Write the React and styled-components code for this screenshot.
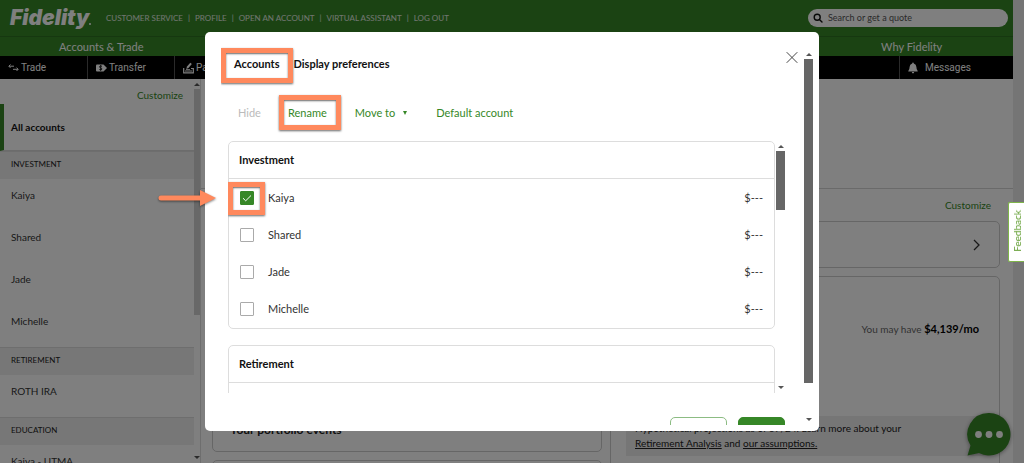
import React, { useState } from "react";
import styled, { createGlobalStyle } from "styled-components";

const GREEN = "#368727";
const ORANGE = "#ff895d";
const sans = '"Lato", "Noto Sans", sans-serif';
const navSans = '"Roboto", "Liberation Sans", sans-serif';

const GlobalStyle = createGlobalStyle`
  *, *::before, *::after { box-sizing: border-box; }
  body { margin: 0; background: #ebebeb; font-family: ${sans}; font-size: 11px; line-height: 16px; color: #333; }
  button, input { font: inherit; color: inherit; }
  button { border: 0; padding: 0; background: none; cursor: pointer; }
  ul, h1, h2, p { margin: 0; padding: 0; list-style: none; }
`;

/* ---------- page behind the dialog ---------- */

const Page = styled.div`
  height: 100vh;
  padding-right: 11px;
  overflow: hidden;
  display: flex;
  flex-direction: column;
  font-size: 10px;
`;

const TopBar = styled.header`
  display: flex;
  align-items: center;
  flex: none;
  height: 36px;
  padding: 0 5px 0 10px;
  background: ${GREEN};
  color: #fff;
`;

const Logo = styled.a`
  width: 96px;
  color: #fff;
  font: italic 900 21px/32px "Inter", ${sans};
  text-decoration: none;
  &::after {
    content: "";
    display: inline-block;
    width: 2px;
    height: 2px;
    border-radius: 1px;
    background: #fff;
  }
`;

const UtilityLinks = styled.nav`
  display: flex;
  flex: 1;
  font-size: 8px;
  line-height: 12px;
  white-space: nowrap;
`;

const UtilityLink = styled.a`
  color: #e2ebe0;
  text-decoration: none;
  & + &::before { content: "|"; margin: 0 5px; }
`;

const SearchBox = styled.label`
  display: flex;
  align-items: center;
  gap: 5px;
  width: 200px;
  height: 18px;
  padding: 0 5px;
  border-radius: 9px;
  background: #fff;
  color: #222;
`;

const SearchInput = styled.input`
  flex: 1;
  min-width: 0;
  height: 16px;
  padding: 0;
  border: 0;
  outline: 0;
  background: none;
  font-size: 9px;
  &::placeholder { color: #555; opacity: 1; }
`;

const MainTabs = styled.nav`
  display: grid;
  grid-template-columns: repeat(5, 1fr);
  flex: none;
  height: 20px;
  border-top: 1px solid #2c7020;
  background: ${GREEN};
`;

const MainTab = styled.a`
  grid-column: ${(p) => p.$column};
  text-align: center;
  font-size: 11px;
  line-height: 19px;
  color: #fff;
  text-decoration: none;
`;

const ActionNav = styled.nav`
  display: grid;
  grid-template-columns: 87px 87px 87px 1fr 114px;
  flex: none;
  height: 23px;
  background: #000;
`;

const Action = styled.a`
  grid-column: ${(p) => p.$column};
  display: flex;
  align-items: center;
  gap: ${(p) => p.$gap || 2}px;
  padding-left: 8px;
  border-left: ${(p) => (p.$column > 1 ? "1px solid #555" : "0")};
  font: 10px/16px ${navSans};
  color: #fff;
  text-decoration: none;
`;

const Body = styled.div`
  display: flex;
  flex: 1;
  min-height: 0;
  background: #fff;
`;

const Sidebar = styled.aside`
  display: flex;
  width: 201px;
  flex: none;
  border-right: 1px solid #ddd;
`;

const SideList = styled.div`
  flex: 1;
  min-width: 0;
  overflow: hidden;
`;

const CustomizeRow = styled.div`
  display: flex;
  justify-content: flex-end;
  padding: ${(p) => p.$pad};
`;

const TextLink = styled.a`
  color: ${GREEN};
  text-decoration: none;
`;

const AllAccounts = styled.h2`
  height: 47px;
  padding: 15px 7px;
  border-left: 4px solid ${GREEN};
  border-bottom: 1px solid #d8d8d8;
  font-size: 10px;
  line-height: 16px;
  color: #111;
`;

const Band = styled.h2`
  height: 28px;
  padding: 4px 11px;
  background: #eee;
  border-top: 1px solid #dcdcdc;
  font-size: 8px;
  line-height: 16px;
  font-weight: 400;
  color: #222;
`;

const SideItem = styled.li`
  height: 42px;
  padding: 8px 11px;
`;

const Main = styled.main`
  flex: 1;
  min-width: 0;
`;

const Hero = styled.section`
  height: 110px;
  border-bottom: 1px solid #d4d4d4;
`;

const Content = styled.section`
  padding: 0 13px 0 11px;
`;

const Card = styled.article`
  border: 1px solid #ccc;
  border-radius: 5px;
`;

const BannerCard = styled(Card)`
  display: flex;
  align-items: center;
  justify-content: flex-end;
  height: 47px;
  padding-right: 19px;
  margin-bottom: 8px;
`;

const Columns = styled.div`
  display: grid;
  grid-template-columns: 1fr 1fr;
  gap: 8px;
`;

const Column = styled.div`
  display: flex;
  flex-direction: column;
  gap: 8px;
`;

const EventsCard = styled(Card)`
  display: flex;
  align-items: flex-end;
  height: 176px;
  padding: 12px 17px;
`;

const BlankCard = styled(Card)`
  height: 80px;
`;

const CardTitle = styled.h2`
  font-size: 12px;
  line-height: 18px;
  color: #222;
`;

const PlanCard = styled(Card)`
  display: flex;
  flex-direction: column;
  justify-content: space-between;
  height: 200px;
  padding: 44px 11px 19px 15px;
`;

const Estimate = styled.p`
  padding-right: 9px;
  text-align: right;
  color: #666;
  strong { font-size: 11px; color: #000; }
`;

const Note = styled.p`
  padding: 5px 9px;
  background: #ececec;
  line-height: 15px;
  white-space: nowrap;
  color: #222;
  a { color: #222; }
`;

const Chat = styled.button`
  position: fixed;
  right: 13px;
  bottom: 6px;
  width: 45px;
  height: 45px;
  svg { display: block; filter: drop-shadow(0 1px 2px rgba(0, 0, 0, 0.4)); }
`;

/* ---------- scroll bars ---------- */

const Bar = styled.div`
  display: flex;
  flex-direction: column;
  align-items: center;
  flex: none;
  width: ${(p) => p.$width}px;
`;

const Thumb = styled.div`
  width: 100%;
  height: ${(p) => p.$length};
  background: ${(p) => p.$color || "#666"};
`;

const Arrow = styled.span`
  width: 0;
  margin: ${(p) => (p.$down ? "auto 0 4px" : "4px 0 3px")};
  border: solid transparent;
  border-width: ${(p) => (p.$down ? "3px 3px 0" : "0 3px 3px")};
  border-${(p) => (p.$down ? "top" : "bottom")}-color: #555;
`;

/* ---------- dialog ---------- */

const Overlay = styled.div`
  position: fixed;
  inset: 0;
  display: flex;
  justify-content: center;
  padding: 32px;
  background: rgba(0, 0, 0, 0.5);
`;

const Dialog = styled.section`
  position: relative;
  display: flex;
  width: 100%;
  max-width: 614px;
  padding: 17px 6px 6px 16px;
  border-radius: 5px;
  background: #fff;
`;

const DialogBody = styled.div`
  display: flex;
  flex-direction: column;
  flex: 1;
  min-width: 0;
  padding-left: 7px;
  margin-top: -4px;
  padding-top: 4px;
  overflow: hidden;
`;

const DialogHead = styled.div`
  display: flex;
  justify-content: space-between;
  align-items: flex-start;
  flex: none;
  height: 34px;
  padding-right: 6px;
`;

const Tabs = styled.div`
  display: flex;
  height: 34px;
`;

const Tab = styled.button`
  position: relative;
  padding: 0 6px 2px;
  border-bottom: 2px solid ${(p) => (p.$active ? GREEN : "transparent")};
  font-weight: 700;
  color: #111;
  & + & { padding-left: 0; margin-left: 8px; }
`;

const CloseButton = styled.button`
  width: 12px;
  height: 16px;
  svg { display: block; }
`;

const Toolbar = styled.div`
  display: flex;
  flex: none;
  align-items: center;
  padding: 22px 10px 20px;
`;

const Tool = styled.button`
  position: relative;
  margin-right: ${(p) => p.$space || 0}px;
  color: ${GREEN};
  &:disabled { color: #bbb; }
`;

const Caret = styled.span`
  display: inline-block;
  margin: 0 0 2px 8px;
  border: solid transparent;
  border-width: 4px 2px 0;
  border-top-color: ${GREEN};
`;

const ListArea = styled.div`
  display: flex;
  flex: 1;
  min-height: 120px;
  padding-right: 19px;
  gap: 1px;
`;

const Groups = styled.div`
  display: flex;
  flex-direction: column;
  flex: 1;
  gap: 16px;
  overflow: hidden;
`;

const Group = styled.section`
  flex: none;
  border: 1px solid #ddd;
  border-radius: 5px;
`;

const GroupTitle = styled.h2`
  height: 37px;
  padding: 10px;
  border-bottom: 1px solid #ddd;
  font-size: 11px;
  line-height: 16px;
  color: #111;
`;

const Rows = styled.ul`
  min-height: 37px;
  padding-bottom: 1px;
`;

const Row = styled.li`
  display: flex;
  align-items: center;
  height: 37px;
  padding: 0 11px;
`;

const RowLabel = styled.label`
  display: flex;
  align-items: center;
  flex: 1;
  gap: 14px;
`;

const CheckWrap = styled.span`
  position: relative;
  display: flex;
`;

const Check = styled.input`
  appearance: none;
  width: 14px;
  height: 14px;
  margin: 0;
  border: 1px solid #aaa;
  border-radius: 1px;
  background: #fff;
  &:checked { border-color: ${GREEN}; background: ${GREEN}; }
  & + svg { position: absolute; inset: 0; pointer-events: none; }
`;

const Footer = styled.footer`
  display: flex;
  flex: none;
  justify-content: flex-end;
  gap: 11px;
  height: 32px;
  padding: 24px 19px 0 0;
  overflow: hidden;
`;

const FooterButton = styled.button`
  flex: none;
  width: ${(p) => (p.$primary ? 47 : 57)}px;
  height: 24px;
  border: 1px solid ${(p) => (p.$primary ? GREEN : "#8cbc83")};
  border-radius: 5px;
  background: ${(p) => (p.$primary ? GREEN : "#fff")};
`;

/* ---------- annotations over the page ---------- */

const Highlight = styled.span`
  position: absolute;
  inset: ${(p) => p.$inset};
  border: 5px solid ${ORANGE};
  box-shadow: 0 1px 2px rgba(0, 0, 0, 0.6), inset 0 1px 2px rgba(0, 0, 0, 0.6);
  pointer-events: none;
`;

const Pointer = styled.svg`
  position: absolute;
  left: -47px;
  top: 157px;
  filter: drop-shadow(0 1px 1px rgba(0, 0, 0, 0.5));
`;

const Feedback = styled.button`
  position: fixed;
  right: 0;
  top: 202px;
  width: 16px;
  height: 60px;
  border: 1px solid #7fb54a;
  border-right: 0;
  border-radius: 2px 0 0 2px;
  background: #fff;
  color: #5f9c2e;
  font-size: 10px;
  line-height: 14px;
  span { writing-mode: vertical-rl; rotate: 180deg; }
`;

function Scroll({ width, length, color }) {
  return (
    <Bar $width={width} aria-hidden="true">
      <Arrow />
      <Thumb $length={length} $color={color} />
      <Arrow $down />
    </Bar>
  );
}

const investment = ["Kaiya", "Shared", "Jade", "Michelle"];
const sideGroups = [
  { title: "INVESTMENT", items: investment },
  { title: "RETIREMENT", items: ["ROTH IRA"] },
  { title: "EDUCATION", items: ["Kaiya - UTMA"] },
];

export default function App() {
  const [checked, setChecked] = useState({ Kaiya: true });

  return (
    <>
      <GlobalStyle />
      <Page>
        <TopBar>
          <Logo href="#home">Fidelity</Logo>
          <UtilityLinks>
            {["CUSTOMER SERVICE", "PROFILE", "OPEN AN ACCOUNT", "VIRTUAL ASSISTANT", "LOG OUT"].map((t) => (
              <UtilityLink href="#utility" key={t}>{t}</UtilityLink>
            ))}
          </UtilityLinks>
          <SearchBox>
            <svg width="10" height="10" viewBox="0 0 10 10" fill="none" stroke="#111" strokeWidth="1.4">
              <circle cx="4.2" cy="4.2" r="3" />
              <path d="M6.4 6.4 9 9" strokeLinecap="round" />
            </svg>
            <SearchInput placeholder="Search or get a quote" aria-label="Search" />
          </SearchBox>
        </TopBar>
        <MainTabs>
          <MainTab href="#trade" $column={1}>Accounts &amp; Trade</MainTab>
          <MainTab href="#why" $column={5}>Why Fidelity</MainTab>
        </MainTabs>
        <ActionNav>
          <Action href="#t" $column={1}>
            <svg width="11" height="8" viewBox="0 0 11 8" fill="none" stroke="#fff">
              <path d="M2.5 .5.8 2.2l1.7 1.7M1 2.2h5M8.5 3.6l1.7 1.7-1.7 1.7M10 5.3H5" />
            </svg>
            Trade
          </Action>
          <Action href="#x" $column={2}>
            <svg width="11" height="8" viewBox="0 0 11 8">
              <path d="M1 .5h6.5L11 4 7.500 7.500H1Q0 7.500 0 6.500v-5Q0 .5 1 .5z" fill="#fff" />
              <path d="M6 2.300Q3.500 1.300 3.500 2.800 3.500 3.700 4.800 4 6 4.300 6 5.100 5.500 6.200 3.300 5.500M4.700 1v6" fill="none" stroke="#000" strokeWidth=".8" />
            </svg>
            Transfer
          </Action>
          <Action href="#p" $column={3}>
            <svg width="11" height="12" viewBox="0 0 11 12" fill="none" stroke="#fff">
              <path d="M.7 6v4.800h9.600V6.500H8" strokeWidth="1.200" />
              <path d="M2 9h7" />
              <path d="m3.300 7 .7-2.500L7.300.8l1.500 1.300L5.500 6z" fill="#fff" stroke="none" />
              <path d="M3 7.500h4" strokeWidth=".8" />
            </svg>
            Pay
          </Action>
          <Action href="#m" $column={5} $gap={7}>
            <svg width="10" height="12" viewBox="0 0 10 12" fill="#fff">
              <path d="M5 .5q.8 0 .8.9Q8.300 2 8.400 5q0 2.500 1.300 3.900V9.500H.3V8.900Q1.600 7.500 1.600 5 1.700 2 4.200 1.400 4.200.5 5 .5zM3.800 10.100h2.400Q6 11.400 5 11.400T3.800 10.100z" />
            </svg>
            Messages
          </Action>
        </ActionNav>
        <Body>
          <Sidebar>
            <SideList>
              <CustomizeRow $pad="8px 11px 1px"><TextLink href="#c1">Customize</TextLink></CustomizeRow>
              <AllAccounts>All accounts</AllAccounts>
              {sideGroups.map((g) => (
                <section key={g.title}>
                  <Band>{g.title}</Band>
                  <ul>{g.items.map((i) => <SideItem key={i}>{i}</SideItem>)}</ul>
                </section>
              ))}
            </SideList>
            <Scroll width={6} length="226px" color="#d0d0d0" />
          </Sidebar>
          <Main>
            <Hero />
            <Content>
              <CustomizeRow $pad="8px 9px"><TextLink href="#c2">Customize</TextLink></CustomizeRow>
              <BannerCard>
                <svg width="7" height="12" viewBox="0 0 7 12" fill="none" stroke="#333" strokeWidth="1.300">
                  <path d="m1 1 5 5-5 5" />
                </svg>
              </BannerCard>
              <Columns>
                <Column>
                  <EventsCard><CardTitle>Your portfolio events</CardTitle></EventsCard>
                  <BlankCard />
                </Column>
                <PlanCard>
                  <Estimate>You may have <strong>$4,139/mo</strong></Estimate>
                  <Note>
                    Hypothetical projections as of 07/24. Learn more about your
                    <br />
                    <a href="#ra">Retirement Analysis</a> and <a href="#as">our assumptions.</a>
                  </Note>
                </PlanCard>
              </Columns>
            </Content>
          </Main>
        </Body>
        <Chat aria-label="Chat">
          <svg width="45" height="45" viewBox="0 0 45 45">
            <path d="M23 1a21.300 21.300 0 1 1-10 40L1.500 43.500 4.500 33.500A21.300 21.300 0 0 1 23 1z" fill={GREEN} />
            <g fill="#fff">
              <circle cx="12.500" cy="22.500" r="3.400" />
              <circle cx="23" cy="22.500" r="3.400" />
              <circle cx="33.500" cy="22.500" r="3.400" />
            </g>
          </svg>
        </Chat>
      </Page>

      <Overlay>
        <Dialog role="dialog" aria-modal="true" aria-label="Accounts">
          <DialogBody>
            <DialogHead>
              <Tabs role="tablist">
                <Tab role="tab" $active>
                  Accounts
                  <Highlight $inset="-1px -8px -2px -7px" />
                </Tab>
                <Tab role="tab">Display preferences</Tab>
              </Tabs>
              <CloseButton aria-label="Close">
                <svg width="12" height="16" viewBox="0 0 12 16" fill="none" stroke="#444">
                  <path d="m.7 3.200 10.600 10.600M11.300 3.200.7 13.800" />
                </svg>
              </CloseButton>
            </DialogHead>
            <Toolbar>
              <Tool disabled $space={27}>Hide</Tool>
              <Tool $space={28}>
                Rename
                <Highlight $inset="-10px -14px -9px -9px" />
              </Tool>
              <Tool $space={29}>Move to<Caret /></Tool>
              <Tool>Default account</Tool>
            </Toolbar>
            <ListArea>
              <Groups>
                <Group>
                  <GroupTitle>Investment</GroupTitle>
                  <Rows>
                    {investment.map((name) => (
                      <Row key={name}>
                        <RowLabel>
                          <CheckWrap>
                            <Check
                              type="checkbox"
                              checked={!!checked[name]}
                              onChange={(e) => setChecked({ ...checked, [name]: e.target.checked })}
                            />
                            {checked[name] && (
                              <svg width="14" height="14" viewBox="0 0 14 14" fill="none" stroke="#fff">
                                <path d="m3 7.200 2.700 2.600L11 4.500" />
                              </svg>
                            )}
                            {name === "Kaiya" && <Highlight $inset="-9px -11px -10px -12px" />}
                          </CheckWrap>
                          {name}
                        </RowLabel>
                        <span>$---</span>
                      </Row>
                    ))}
                  </Rows>
                </Group>
                <Group>
                  <GroupTitle>Retirement</GroupTitle>
                  <Rows />
                </Group>
              </Groups>
              <Scroll width={9} length="59px" />
            </ListArea>
            <Footer>
              <FooterButton aria-label="Cancel" />
              <FooterButton $primary aria-label="Save" />
            </Footer>
          </DialogBody>
          <Scroll width={9} length="324px" />
          <Pointer width="58" height="18" viewBox="0 0 58 18" aria-hidden="true">
            <path d="M3 9h42" stroke={ORANGE} strokeWidth="5" strokeLinecap="round" />
            <path d="M42 1v16l16-8z" fill={ORANGE} />
          </Pointer>
        </Dialog>
      </Overlay>
      <Feedback><span>Feedback</span></Feedback>
    </>
  );
}
